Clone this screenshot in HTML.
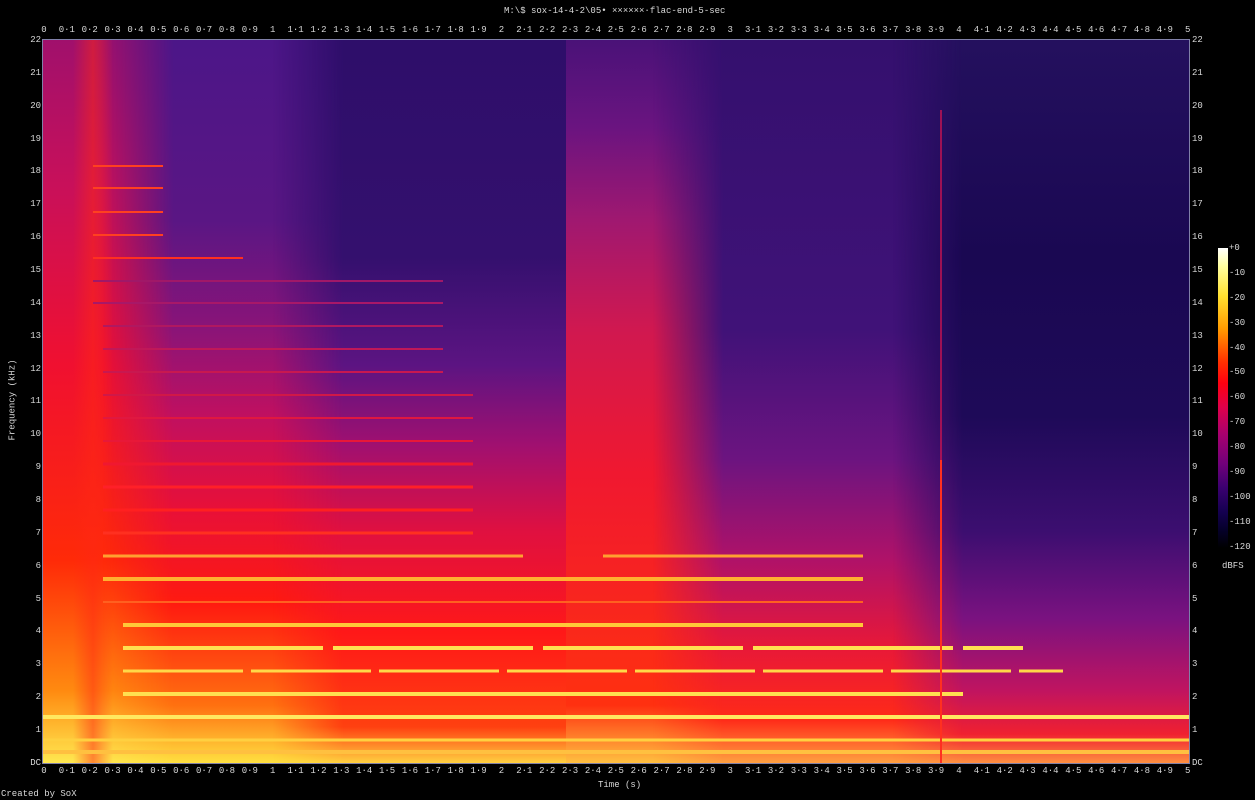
<!DOCTYPE html>
<html><head><meta charset="utf-8">
<style>
*{margin:0;padding:0;box-sizing:border-box}
body{width:1255px;height:800px;background:#000;position:relative;overflow:hidden;font-family:"Liberation Mono","DejaVu Sans Mono",monospace;color:#d8d8d8;font-size:9px}
.t{position:absolute;white-space:nowrap}
.xr{position:absolute;display:flex;left:32.5px;height:11px}
.xr span{width:22.88px;text-align:center;flex:none}
.yl{position:absolute;display:flex;flex-direction:column;top:34px;left:0;width:41px;text-align:right}
.yl span,.yr span{height:32.86px;line-height:12px;flex:none}
.yr{position:absolute;display:flex;flex-direction:column;top:34px;left:1192px;text-align:left}
.cb{position:absolute;display:flex;flex-direction:column;left:1229px;top:242px}
.cb span{height:24.9px;line-height:12px}
#plot{position:absolute;left:43px;top:40px;width:1146px;height:723px;overflow:hidden;background:#3a1278}
.c{position:absolute;top:0;height:723px}
.f{-webkit-mask-image:linear-gradient(to right,transparent,#000 70px);mask-image:linear-gradient(to right,transparent,#000 70px)}
</style></head><body>
<div class="t" style="left:504px;top:6px">M:\$ sox-14-4-2\05• ××××××·flac-end-5-sec</div>
<div class="xr" style="top:25px"><span>0</span><span>0·1</span><span>0·2</span><span>0·3</span><span>0·4</span><span>0·5</span><span>0·6</span><span>0·7</span><span>0·8</span><span>0·9</span><span>1</span><span>1·1</span><span>1·2</span><span>1·3</span><span>1·4</span><span>1·5</span><span>1·6</span><span>1·7</span><span>1·8</span><span>1·9</span><span>2</span><span>2·1</span><span>2·2</span><span>2·3</span><span>2·4</span><span>2·5</span><span>2·6</span><span>2·7</span><span>2·8</span><span>2·9</span><span>3</span><span>3·1</span><span>3·2</span><span>3·3</span><span>3·4</span><span>3·5</span><span>3·6</span><span>3·7</span><span>3·8</span><span>3·9</span><span>4</span><span>4·1</span><span>4·2</span><span>4·3</span><span>4·4</span><span>4·5</span><span>4·6</span><span>4·7</span><span>4·8</span><span>4·9</span><span>5</span></div>
<div class="xr" style="top:766px"><span>0</span><span>0·1</span><span>0·2</span><span>0·3</span><span>0·4</span><span>0·5</span><span>0·6</span><span>0·7</span><span>0·8</span><span>0·9</span><span>1</span><span>1·1</span><span>1·2</span><span>1·3</span><span>1·4</span><span>1·5</span><span>1·6</span><span>1·7</span><span>1·8</span><span>1·9</span><span>2</span><span>2·1</span><span>2·2</span><span>2·3</span><span>2·4</span><span>2·5</span><span>2·6</span><span>2·7</span><span>2·8</span><span>2·9</span><span>3</span><span>3·1</span><span>3·2</span><span>3·3</span><span>3·4</span><span>3·5</span><span>3·6</span><span>3·7</span><span>3·8</span><span>3·9</span><span>4</span><span>4·1</span><span>4·2</span><span>4·3</span><span>4·4</span><span>4·5</span><span>4·6</span><span>4·7</span><span>4·8</span><span>4·9</span><span>5</span></div>
<div class="yl"><span>22</span><span>21</span><span>20</span><span>19</span><span>18</span><span>17</span><span>16</span><span>15</span><span>14</span><span>13</span><span>12</span><span>11</span><span>10</span><span>9</span><span>8</span><span>7</span><span>6</span><span>5</span><span>4</span><span>3</span><span>2</span><span>1</span><span>DC</span></div>
<div class="yr"><span>22</span><span>21</span><span>20</span><span>19</span><span>18</span><span>17</span><span>16</span><span>15</span><span>14</span><span>13</span><span>12</span><span>11</span><span>10</span><span>9</span><span>8</span><span>7</span><span>6</span><span>5</span><span>4</span><span>3</span><span>2</span><span>1</span><span>DC</span></div>
<div class="t" style="left:-28px;top:395px;transform:rotate(-90deg)">Frequency (kHz)</div>
<div class="t" style="left:598px;top:780px">Time (s)</div>
<div class="t" style="left:1px;top:789px">Created by SoX</div>
<div class="t" style="left:1222px;top:561px">dBFS</div>
<div style="position:absolute;left:1218px;top:248px;width:10px;height:300px;background:linear-gradient(to bottom,#fff 0%,#ffffa0 6%,#ffe030 16%,#ff9a00 27%,#ff3000 38%,#ff0010 45%,#e0004a 53%,#a8006e 62%,#70007a 72%,#3a0070 80%,#140050 88%,#05002a 94%,#000 100%)"></div>
<div class="cb"><span>+0</span><span>-10</span><span>-20</span><span>-30</span><span>-40</span><span>-50</span><span>-60</span><span>-70</span><span>-80</span><span>-90</span><span>-100</span><span>-110</span><span>-120</span></div>
<div style="position:absolute;left:42px;top:39px;width:1148px;height:725px;border:1px solid #8080a8"></div>
<div id="plot">
<div class="c" style="left:0;width:140px;background:linear-gradient(to top,#ffe850 0%,#ff8a10 10%,#ff2a08 28%,#f01030 55%,#c8105a 80%,#a0106c 100%)"></div>
<div class="c f" style="left:60px;width:260px;background:linear-gradient(to top,#ffe040 0%,#ff7010 8%,#ff1a10 22%,#e81038 35%,#c01060 48%,#8a1478 60%,#5a1684 75%,#4c1688 100%)"></div>
<div class="c f" style="left:230px;width:300px;background:linear-gradient(to top,#ffd040 0%,#ff4010 5%,#ff1818 18%,#e01040 32%,#a01070 44%,#5c1482 55%,#34106e 70%,#2e0e6a 100%)"></div>
<div class="c" style="left:523px;width:165px;background:linear-gradient(to top,#ffc040 0%,#ff3010 8%,#f01830 40%,#d01850 60%,#a01870 75%,#6a1480 88%,#4a1278 100%)"></div>
<div class="c f" style="left:610px;width:330px;background:linear-gradient(to top,#ffa040 0%,#ff2a18 6%,#e81838 16%,#b01268 28%,#6c1480 42%,#401278 60%,#34106e 100%)"></div>
<div class="c f" style="left:850px;width:296px;background:linear-gradient(to top,#ff9040 0%,#f02030 4%,#c01460 10%,#7a1280 20%,#3c0e70 32%,#1e0a58 48%,#1a0852 70%,#24105e 100%)"></div>
<div class="c" style="left:30px;width:40px;background:linear-gradient(to right,transparent,rgba(255,40,20,.5),transparent)"></div>
<svg style="position:absolute;left:0;top:0" width="1146" height="723" viewBox="0 0 1146 723">
<g stroke-linecap="butt">
<line x1="0" y1="677" x2="1146" y2="677" stroke="#ffe860" stroke-width="4"/>
<line x1="0" y1="700" x2="1146" y2="700" stroke="#ffd040" stroke-width="3"/>
<line x1="0" y1="712" x2="1146" y2="712" stroke="#ffc040" stroke-width="4"/>
<line x1="80" y1="654" x2="920" y2="654" stroke="#ffe050" stroke-width="4"/>
<line x1="80" y1="631" x2="1020" y2="631" stroke="#ffd848" stroke-width="3" stroke-dasharray="120 8"/>
<line x1="80" y1="608" x2="980" y2="608" stroke="#ffe050" stroke-width="4" stroke-dasharray="200 10"/>
<line x1="80" y1="585" x2="820" y2="585" stroke="#ffc838" stroke-width="4"/>
<line x1="60" y1="562" x2="820" y2="562" stroke="#ff6020" stroke-width="2"/>
<line x1="60" y1="539" x2="820" y2="539" stroke="#ffb030" stroke-width="4"/>
<line x1="60" y1="516" x2="820" y2="516" stroke="#ffa030" stroke-width="3" stroke-dasharray="420 80"/>
<line x1="60" y1="493" x2="430" y2="493" stroke="#ff3020" stroke-width="3"/>
<line x1="60" y1="470" x2="430" y2="470" stroke="#ff2020" stroke-width="3"/>
<line x1="60" y1="447" x2="430" y2="447" stroke="#ff2028" stroke-width="3"/>
<line x1="60" y1="424" x2="430" y2="424" stroke="#f01830" stroke-width="3"/>
<line x1="60" y1="401" x2="430" y2="401" stroke="#e81838" stroke-width="2"/>
<line x1="60" y1="378" x2="430" y2="378" stroke="#e01840" stroke-width="2"/>
<line x1="60" y1="355" x2="430" y2="355" stroke="#d01848" stroke-width="2"/>
<line x1="60" y1="332" x2="400" y2="332" stroke="#c81850" stroke-width="2"/>
<line x1="60" y1="309" x2="400" y2="309" stroke="#c01858" stroke-width="2"/>
<line x1="60" y1="286" x2="400" y2="286" stroke="#b01860" stroke-width="2"/>
<line x1="50" y1="263" x2="400" y2="263" stroke="#a81868" stroke-width="2"/>
<line x1="50" y1="241" x2="400" y2="241" stroke="#a01868" stroke-width="2"/>
<line x1="50" y1="126" x2="120" y2="126" stroke="#ff4020" stroke-width="2"/>
<line x1="50" y1="148" x2="120" y2="148" stroke="#ff4020" stroke-width="2"/>
<line x1="50" y1="172" x2="120" y2="172" stroke="#ff4020" stroke-width="2"/>
<line x1="50" y1="195" x2="120" y2="195" stroke="#ff4020" stroke-width="2"/>
<line x1="50" y1="218" x2="200" y2="218" stroke="#ff3020" stroke-width="2"/>
<line x1="898" y1="70" x2="898" y2="723" stroke="#d01450" stroke-width="2" opacity=".7"/>
<line x1="898" y1="420" x2="898" y2="723" stroke="#ff3020" stroke-width="2"/>
</g>
</svg>
</div>
</body></html>
